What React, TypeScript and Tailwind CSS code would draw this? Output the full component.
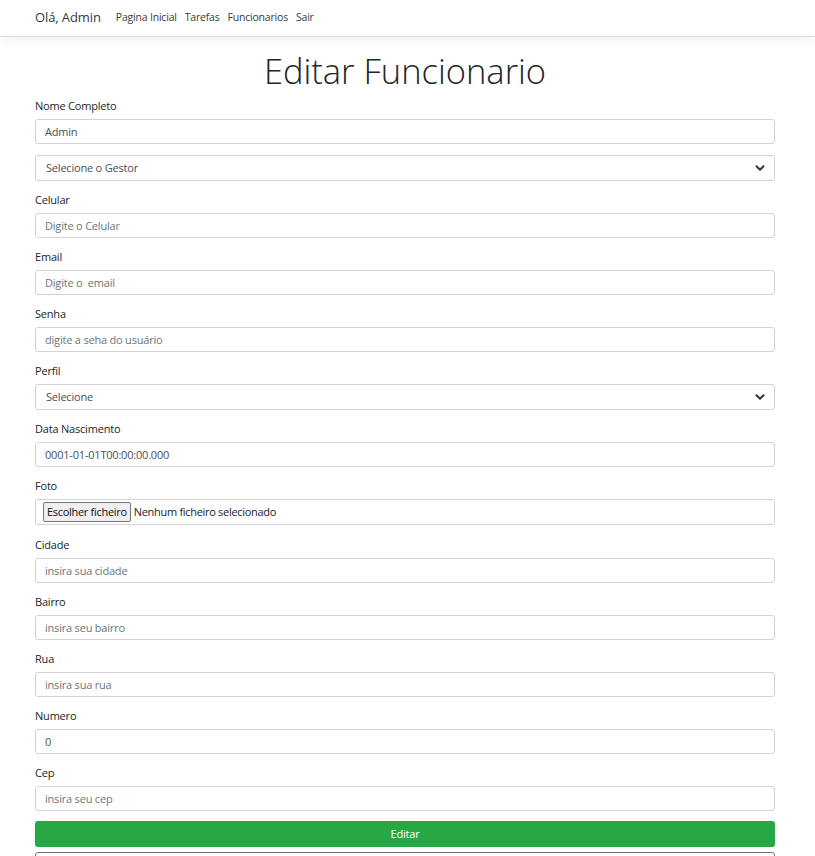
import { ChevronDown } from 'lucide-react'

const font = { fontFamily: '"Open Sans", "Noto Sans", sans-serif' }

function Label({ text }: { text: string }) {
  return <label className="block text-[11px] tracking-[-0.2px] leading-[18px] text-[#212529] mb-[4px]">{text}</label>
}

function TextField({ label, placeholder, value, wide }: { label?: string; placeholder?: string; value?: string; wide?: boolean }) {
  return (
    <div className={wide ? 'mb-[11px]' : 'mb-[10px]'}>
      {label && <Label text={label} />}
      <input
        defaultValue={value}
        placeholder={placeholder}
        className="block w-full h-[25px] px-[9px] text-[11px] tracking-[-0.2px] text-[#495057] placeholder:text-[#6c757d] bg-white border border-[#ced4da] rounded-[3px] outline-none"
        style={font}
      />
    </div>
  )
}

function SelectField({ label, text }: { label?: string; text: string }) {
  return (
    <div className="mb-[10px]">
      {label && <Label text={label} />}
      <div className="relative">
        <select
          className="block w-full h-[26px] pl-[10px] pr-8 text-[11px] tracking-[-0.2px] text-[#495057] bg-white border border-[#ced4da] rounded-[3px] appearance-none outline-none"
          style={font}
        >
          <option>{text}</option>
        </select>
        <ChevronDown className="absolute right-[8px] top-[6px] w-[14px] h-[14px] text-[#343a40] pointer-events-none" strokeWidth={3.5} />
      </div>
    </div>
  )
}

export default function App() {
  return (
    <div className="min-h-screen bg-white" style={font}>
      {/* Navbar */}
      <nav className="h-[37px] bg-white border-b border-[#dcdcdc] shadow-[0_3px_10px_rgba(0,0,0,0.06)] flex items-center pl-[35px]">
        <span className="text-[13px] tracking-[-0.1px] text-[#343a40] mr-[15px]">Olá, Admin</span>
        <div className="flex items-center gap-[8px] text-[10.5px] tracking-[-0.2px] text-[#3a3a3a]">
          <a>Pagina Inicial</a>
          <a>Tarefas</a>
          <a>Funcionarios</a>
          <a>Sair</a>
        </div>
      </nav>

      <div className="pl-[35px] pr-[40px]">
        <h1 className="text-center text-[34.5px] font-light text-[#212529] leading-[42px] mt-[13px] mb-[5px]">Editar Funcionario</h1>

        <form>
          <TextField label="Nome Completo" value="Admin" wide />
          <SelectField text="Selecione o Gestor" />
          <TextField label="Celular" placeholder="Digite o Celular" />
          <TextField label="Email" placeholder="Digite o  email" />
          <TextField label="Senha" placeholder="digite a seha do usuário" />
          <SelectField label="Perfil" text="Selecione" />
          <TextField label="Data Nascimento" value="0001-01-01T00:00:00.000" />

          <div className="mb-[11px]">
            <Label text="Foto" />
            <div className="flex items-center h-[26px] px-[7px] bg-white border border-[#ced4da] rounded-[3px]">
              <span className="h-[20px] px-[3px] flex items-center text-[11px] tracking-[-0.3px] text-[#111] bg-[#efefef] border border-[#767676] rounded-[2px]">
                Escolher ficheiro
              </span>
              <span className="ml-[3px] text-[11px] tracking-[-0.3px] text-[#212529]">Nenhum ficheiro selecionado</span>
            </div>
          </div>

          <TextField label="Cidade" placeholder="insira sua cidade" />
          <TextField label="Bairro" placeholder="insira seu bairro" />
          <TextField label="Rua" placeholder="insira sua rua" />
          <TextField label="Numero" value="0" />
          <TextField label="Cep" placeholder="insira seu cep" />

          <button
            type="button"
            className="block w-full h-[26px] mt-[2px] bg-[#28a745] text-white text-[11px] tracking-[-0.2px] rounded-[3px]"
          >
            Editar
          </button>
          <button
            type="button"
            className="block w-full h-[36px] mt-[5px] bg-white text-[#6c757d] text-[11px] border border-[#6c757d] rounded-[3px]"
          >
            Voltar
          </button>
        </form>
      </div>
    </div>
  )
}
